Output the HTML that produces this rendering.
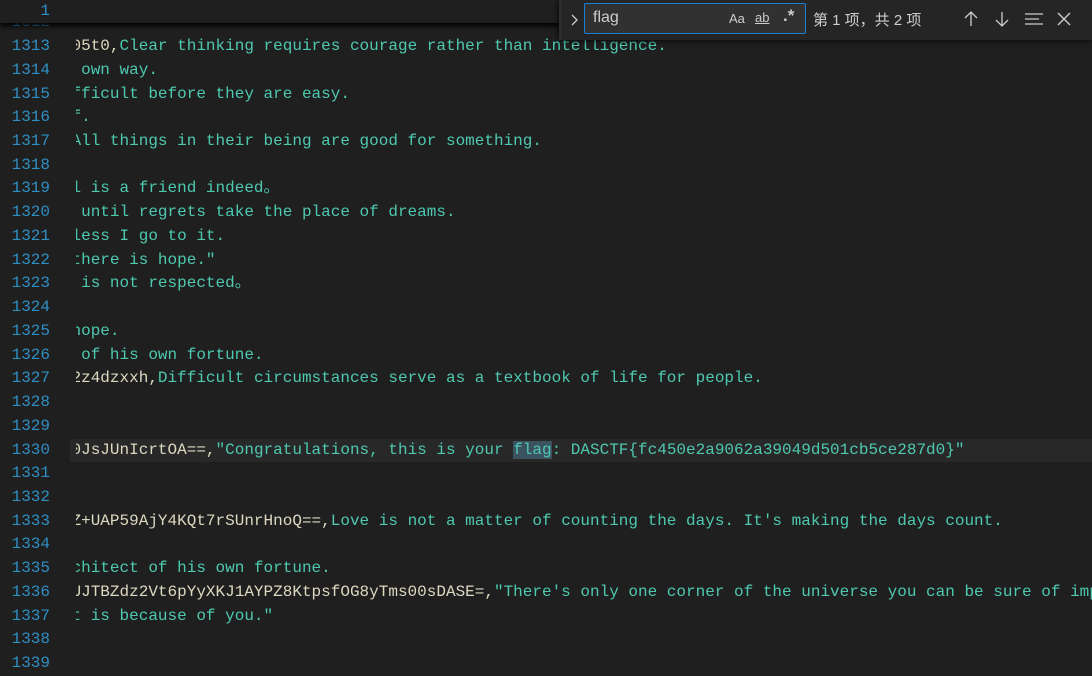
<!DOCTYPE html>
<html><head><meta charset="utf-8"><style>
*{margin:0;padding:0;box-sizing:border-box}
body{width:1092px;height:674px;background:#1f1f1f;overflow:hidden;position:relative;font-family:"Liberation Mono",monospace;font-size:16px}
.g{position:absolute;left:0;width:50px;text-align:right;color:#2f8fc4;font-family:"Liberation Mono",monospace;font-size:16px}
.clip{position:absolute;left:76px;top:0;right:0;height:674px;overflow:hidden}
.t{position:absolute;left:-4.5px;white-space:pre;line-height:23.73px;color:#4ec9b0}
.p{color:#ddd8c0}
.hl{background:#3b5261}
#sticky{position:absolute;left:0;top:0;width:1092px;height:23px;background:#1f1f1f;box-shadow:0 3px 5px #000;z-index:5}
#find{position:absolute;left:559px;top:0;width:533px;height:40px;background:#252526;box-shadow:0 0 6px #000;z-index:10;border-left:3px solid #2d2d2d;font-family:"Liberation Sans","Noto Sans CJK SC",sans-serif;color:#ccc}
#inp{position:absolute;left:22px;top:3px;width:222px;height:31px;border:1px solid #1a7fd4;background:#313131;border-radius:2px}
</style></head><body>
<div id="sticky"><div class="g" style="top:0;line-height:23px">1</div></div>
<div class="g" style="top:11.3px;line-height:23.73px">1312<br>1313<br>1314<br>1315<br>1316<br>1317<br>1318<br>1319<br>1320<br>1321<br>1322<br>1323<br>1324<br>1325<br>1326<br>1327<br>1328<br>1329<br>1330<br>1331<br>1332<br>1333<br>1334<br>1335<br>1336<br>1337<br>1338<br>1339</div>
<div style="position:absolute;left:70px;top:438.5px;width:1022px;height:23.73px;background:#282828"></div>
<div class="clip"><div class="t" style="top:11.3px"> 
<span class="p">05t0,</span>Clear thinking requires courage rather than intelligence.
 own way.
fficult before they are easy.
f.
All things in their being are good for something.

l is a friend indeed。
 until regrets take the place of dreams.
less I go to it.
there is hope."
 is not respected。

hope.
 of his own fortune.
<span class="p">2z4dzxxh,</span>Difficult circumstances serve as a textbook of life for people.


<span class="p">0JsJUnIcrtOA==,</span>"Congratulations, this is your <span class="hl">flag</span>: DASCTF{fc450e2a9062a39049d501cb5ce287d0}"


<span class="p">Z+UAP59AjY4KQt7rSUnrHnoQ==,</span>Love is not a matter of counting the days. It's making the days count.

chitect of his own fortune.
<span class="p">UJTBZdz2Vt6pYyXKJ1AYPZ8KtpsfOG8yTms00sDASE=,</span>"There's only one corner of the universe you can be sure of improving
t is because of you."
</div></div>
<div id="find">
<svg style="position:absolute;left:8px;top:12px" width="10" height="16" viewBox="0 0 10 16"><path d="M2 3l5 5-5 5" stroke="#ccc" stroke-width="1.3" fill="none"/></svg>
<div id="inp"><span style="position:absolute;left:8px;top:5px;font-size:16px;color:#ccc">flag</span>
<span style="position:absolute;left:144px;top:7px;font-size:13px">Aa</span>
<span style="position:absolute;left:170px;top:6px;font-size:13px;text-decoration:underline">ab</span>
<span style="position:absolute;left:198px;top:2px;font-size:17px;font-weight:bold">.*</span></div>
<span style="position:absolute;left:251px;top:9px;font-size:15px;white-space:nowrap">第 1 项，共 2 项</span>
<svg style="position:absolute;left:400px;top:10px" width="18" height="18" viewBox="0 0 18 18"><path d="M9 2v14M3 8l6-6 6 6" stroke="#ccc" stroke-width="1.3" fill="none"/></svg>
<svg style="position:absolute;left:431px;top:10px" width="18" height="18" viewBox="0 0 18 18"><path d="M9 2v14M3 10l6 6 6-6" stroke="#ccc" stroke-width="1.3" fill="none"/></svg>
<svg style="position:absolute;left:462px;top:10px" width="20" height="18" viewBox="0 0 20 18"><path d="M1 4h18M1 9h14M1 14h18" stroke="#ccc" stroke-width="1.3" fill="none"/></svg>
<svg style="position:absolute;left:495px;top:12px" width="14" height="14" viewBox="0 0 14 14"><path d="M1 1l12 12M13 1L1 13" stroke="#ccc" stroke-width="1.4" fill="none"/></svg>
</div>
</body></html>
